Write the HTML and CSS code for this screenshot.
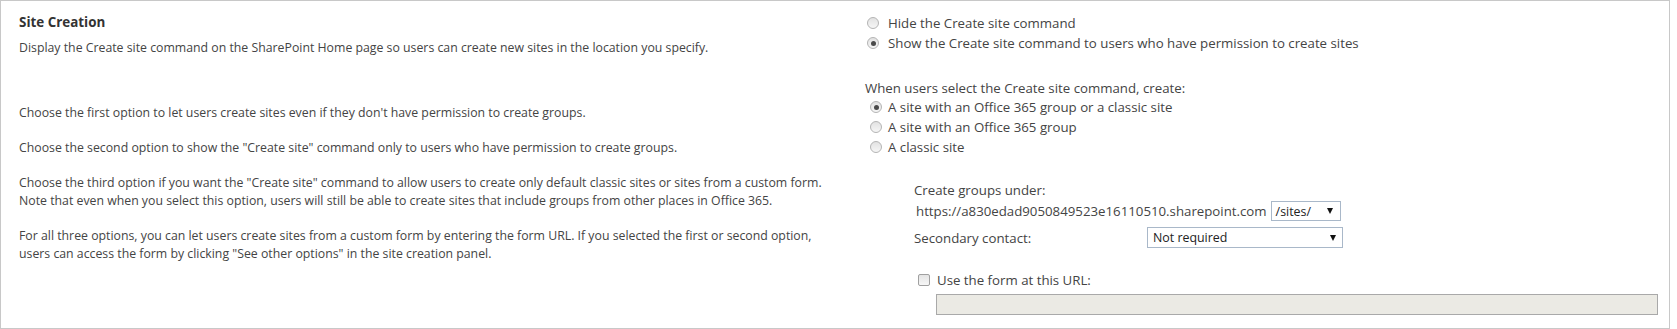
FILE: index.html
```html
<!DOCTYPE html>
<html lang="en">
<head>
    <meta charset="UTF-8">
    <title>Site Creation</title>
    <link rel="stylesheet" href="styles.css">
</head>
<body>
    <div class="panel">
        <div class="info">
            <h2>Site Creation</h2>
            <p class="lead">Display the Create site command on the SharePoint Home page so users can create new sites in the location you specify.</p>

            <p>Choose the first option to let users create sites even if they don't have permission to create groups.</p>
            <p>Choose the second option to show the "Create site" command only to users who have permission to create groups.</p>
            <p>Choose the third option if you want the "Create site" command to allow users to create only default classic sites or sites from a custom form.<br>Note that even when you select this option, users will still be able to create sites that include groups from other places in Office 365.</p>
            <p>For all three options, you can let users create sites from a custom form by entering the form URL. If you selected the first or second option,<br>users can access the form by clicking "See other options" in the site creation panel.</p>
        </div>

        <div class="settings">
            <div class="radio-group first">
                <label class="radio-row"><span class="radio"></span>Hide the Create site command</label>
                <label class="radio-row"><span class="radio checked"></span>Show the Create site command to users who have permission to create sites</label>
            </div>

            <div class="question">When users select the Create site command, create:</div>
            <div class="radio-group second">
                <label class="radio-row"><span class="radio checked"></span>A site with an Office 365 group or a classic site</label>
                <label class="radio-row"><span class="radio"></span>A site with an Office 365 group</label>
                <label class="radio-row"><span class="radio"></span>A classic site</label>
            </div>

            <div class="group-options">
                <div class="field-label">Create groups under:</div>
                <div class="url-row">
                    <span class="url">https://a830edad9050849523e16110510.sharepoint.com</span>
                    <div class="select small"><span>/sites/</span><span class="arrow"></span></div>
                </div>
                <div class="contact-row">
                    <span class="contact-label">Secondary contact:</span>
                    <div class="select wide"><span>Not required</span><span class="arrow"></span></div>
                </div>

                <label class="check-row"><span class="checkbox"></span>Use the form at this URL:</label>
                <div class="url-input"></div>
            </div>
        </div>
    </div>
</body>
</html>
```

FILE: styles.css
```css
* {
    margin: 0;
    padding: 0;
    box-sizing: border-box;
}

body {
    font-family: 'Open Sans', 'Segoe UI', sans-serif;
    color: #444;
    background: white;
}

.panel {
    display: grid;
    grid-template-columns: 845px 1fr;
    height: 329px;
    margin-right: 7px;
    padding: 12px 0 0 18px;
    border: 1px solid #c8c8c8;
}

/* left column */

.info h2 {
    font-size: 13.4px;
    font-weight: 700;
    color: #333;
    line-height: 18px;
    margin-bottom: 8px;
}

.info p {
    font-size: 12.3px;
    line-height: 18px;
    margin-bottom: 17px;
}

.info p.lead {
    margin-bottom: 47px;
}

/* right column */

.settings {
    font-size: 13.25px;
}

.radio-group {
    display: flex;
    flex-direction: column;
}

.radio-row {
    display: flex;
    align-items: center;
    height: 20px;
}

.radio-group.first .radio-row {
    padding-left: 3px;
    gap: 9px;
}

.radio-group.second .radio-row {
    padding-left: 6px;
    gap: 6px;
}

.radio {
    width: 12px;
    height: 12px;
    border-radius: 50%;
    border: 1px solid #b4b4b4;
    background: linear-gradient(180deg, #e2e2e2 0%, #f6f6f6 100%);
    display: flex;
    align-items: center;
    justify-content: center;
}

.radio.checked::after {
    content: "";
    width: 5px;
    height: 5px;
    border-radius: 50%;
    background: #4a4a4a;
}

.question {
    line-height: 18px;
    margin-top: 26px;
    padding-left: 1px;
}

.group-options {
    padding-left: 50px;
    margin-top: 24px;
}

.field-label {
    line-height: 18px;
}

.url-row {
    display: flex;
    align-items: center;
    gap: 4px;
    margin-top: 2px;
    padding-left: 2px;
}

.contact-row {
    display: flex;
    align-items: center;
    margin-top: 6px;
}

.contact-label {
    width: 233px;
}

.select {
    display: flex;
    align-items: center;
    justify-content: space-between;
    height: 20px;
    border: 1px solid #a9b8c9;
    background: white;
    color: #222;
    font-size: 12.4px;
}

.select.small {
    width: 70px;
    padding: 0 7px 0 4px;
}

.select.wide {
    width: 196px;
    height: 21px;
    padding: 0 6px 0 5px;
}

.arrow {
    width: 0;
    height: 0;
    border-left: 3px solid transparent;
    border-right: 3px solid transparent;
    border-top: 6px solid #111;
}

.check-row {
    display: flex;
    align-items: center;
    gap: 7px;
    height: 20px;
    margin-top: 22px;
    padding-left: 4px;
}

.checkbox {
    width: 12px;
    height: 12px;
    border: 1px solid #a0a0a0;
    border-radius: 2px;
    background: linear-gradient(180deg, #e4e4e4 0%, #f7f7f7 100%);
}

.url-input {
    width: 722px;
    height: 21px;
    margin: 4px 0 0 22px;
    background: #ebeae4;
    border: 1px solid #a9a9a9;
}
```
